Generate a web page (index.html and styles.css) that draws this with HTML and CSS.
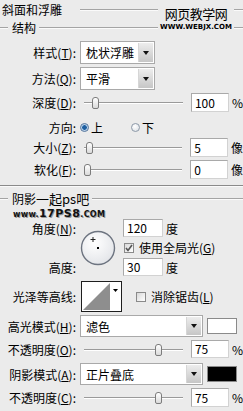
FILE: index.html
```html
<!DOCTYPE html>
<html lang="zh-CN">
<head>
  <meta charset="UTF-8" />
  <meta name="viewport" content="width=device-width, initial-scale=1.0"/>
  <title>斜面和浮雕</title>
  <link rel="stylesheet" href="styles.css">
</head>
<body>
  <div class="dialog">
    <!-- watermark top right -->
    <div class="wm-webjx">
      <div class="wm-cn">网页教学网</div>
      <div class="wm-en">WWW.WEBJX.COM</div>
    </div>

    <div class="title-row">
      <span class="title">斜面和浮雕</span>
      <span class="rule"></span>
    </div>

    <!-- 结构 -->
    <div class="legend">
      <span class="rule stub"></span>
      <span class="legend-text">结构</span>
      <span class="rule"></span>
    </div>

    <div class="row r-style">
      <span class="label">样式(<u>T</u>):</span>
      <div class="select">
        <span class="select-value">枕状浮雕</span>
        <span class="select-btn"></span>
      </div>
    </div>

    <div class="row r-method">
      <span class="label">方法(<u>Q</u>):</span>
      <div class="select">
        <span class="select-value">平滑</span>
        <span class="select-btn"></span>
      </div>
    </div>

    <div class="row r-depth">
      <span class="label">深度(<u>D</u>):</span>
      <div class="slider"><span class="thumb" style="left:8px"></span></div>
      <span class="field">100</span>
      <span class="unit">%</span>
    </div>

    <div class="row r-dir">
      <span class="label">方向:</span>
      <span class="radio checked"></span><span class="opt">上</span>
      <span class="radio gap"></span><span class="opt">下</span>
    </div>

    <div class="row r-size">
      <span class="label">大小(<u>Z</u>):</span>
      <div class="slider"><span class="thumb" style="left:2px"></span></div>
      <span class="field">5</span>
      <span class="unit">像</span>
    </div>

    <div class="row r-soft">
      <span class="label">软化(<u>F</u>):</span>
      <div class="slider"><span class="thumb" style="left:0px"></span></div>
      <span class="field">0</span>
      <span class="unit">像</span>
    </div>

    <div class="separator"></div>

    <!-- 阴影 -->
    <div class="legend shadow-legend">
      <span class="rule stub"></span>
      <span class="legend-text">阴影<span class="wm-17">一起ps吧</span></span>
      <span class="rule"></span>
    </div>
    <div class="wm-17ps8">www.<b>17PS8</b>.COM</div>

    <div class="angle">
      <span class="label a-lbl1">角度(<u>N</u>):</span>
      <div class="dial">
        <svg width="36" height="36" viewBox="0 0 36 36">
          <defs>
            <radialGradient id="dialfill" cx="40%" cy="35%" r="70%">
              <stop offset="0" stop-color="#ffffff"/>
              <stop offset="1" stop-color="#e2e4e8"/>
            </radialGradient>
          </defs>
          <circle cx="18" cy="18" r="16.5" fill="url(#dialfill)" stroke="#6d7480" stroke-width="1.4"/>
          <path d="M13 7v5M10.5 9.5h5" stroke="#222" stroke-width="1"/>
          <rect x="17" y="17" width="2" height="2" fill="#000"/>
        </svg>
      </div>
      <div class="a-cell a-r1"><span class="field wide">120</span><span class="unit">度</span></div>
      <div class="a-cell a-r2"><span class="check checked"></span><span class="opt">使用全局光(<u>G</u>)</span></div>
      <span class="label a-lbl3">高度:</span>
      <div class="a-cell a-r3"><span class="field wide">30</span><span class="unit">度</span></div>
    </div>

    <div class="row r-contour">
      <span class="label">光泽等高线:</span>
      <div class="contour">
        <svg width="41" height="31" viewBox="0 0 41 31">
          <rect x="0.5" y="0.5" width="40" height="30" fill="#fff" stroke="#1e1e1e"/>
          <polygon points="2,29 29,2 29,29" fill="#8e8e8e"/>
          <polygon points="32,8 37,8 34.5,11" fill="#000"/>
        </svg>
      </div>
      <span class="check"></span><span class="opt">消除锯齿(<u>L</u>)</span>
    </div>

    <div class="row r-hmode">
      <span class="label">高光模式(<u>H</u>):</span>
      <div class="select long">
        <span class="select-value">滤色</span>
        <span class="select-btn"></span>
      </div>
      <span class="swatch white"></span>
    </div>

    <div class="row r-op1">
      <span class="label">不透明度(<u>O</u>):</span>
      <div class="slider"><span class="thumb" style="left:71px"></span></div>
      <span class="field">75</span>
      <span class="unit">%</span>
    </div>

    <div class="row r-smode">
      <span class="label">阴影模式(<u>A</u>):</span>
      <div class="select long">
        <span class="select-value">正片叠底</span>
        <span class="select-btn"></span>
      </div>
      <span class="swatch black"></span>
    </div>

    <div class="row r-op2">
      <span class="label">不透明度(<u>C</u>):</span>
      <div class="slider"><span class="thumb" style="left:71px"></span></div>
      <span class="field">75</span>
      <span class="unit">%</span>
    </div>
  </div>
</body>
</html>
```
FILE: styles.css
```css
body {
  margin: 0;
  background: #ebebeb;
  font-family: "Noto Sans CJK SC", sans-serif;
  font-size: 12px;
  color: #000;
}

u {
  text-decoration: underline;
  text-underline-offset: 1px;
}

.dialog {
  position: relative;
  width: 243px;
  height: 411px;
  overflow: hidden;
}

/* header + group legends */
.title-row {
  height: 20px;
  display: flex;
  align-items: center;
}

.title {
  padding-left: 2px;
  padding-right: 18px;
  line-height: 14px;
}

.rule {
  flex: 1;
  height: 1px;
  background: #a4a4a4;
  border-bottom: 1px solid #fafafa;
}

.rule.stub {
  flex: none;
  width: 8px;
}

.legend {
  height: 16px;
  display: flex;
  align-items: center;
}

.legend-text {
  padding: 0 3px 0 4px;
  line-height: 14px;
}

.wm-webjx {
  position: absolute;
  left: 158px;
  top: 5px;
  width: 76px;
  height: 30px;
  background: #ebebeb;
  text-align: center;
  z-index: 1;
}

.wm-cn {
  font-size: 13px;
  line-height: 17px;
  letter-spacing: -0.5px;
}

.wm-en {
  font-family: "DejaVu Sans", sans-serif;
  font-weight: bold;
  font-size: 7px;
  line-height: 10px;
  white-space: nowrap;
}

/* rows */
.row {
  display: flex;
  align-items: center;
}

.label {
  flex: none;
  width: 80px;
  padding-right: 4px;
  box-sizing: border-box;
  text-align: right;
  white-space: nowrap;
}

.r-style { margin-top: 5px; height: 23px; }
.r-method { margin-top: 3px; height: 23px; }
.r-depth { margin-top: 3px; height: 19px; }
.r-dir { margin-top: 6px; height: 18px; }
.r-size { margin-top: 2px; height: 19px; }
.r-soft { margin-top: 3px; height: 19px; }

.select {
  display: flex;
  width: 75px;
  height: 23px;
  box-sizing: border-box;
  background: #fff;
  border: 1px solid #a9a9a9;
}

.select.long {
  width: 123px;
  height: 22px;
}

.select-value {
  flex: 1;
  padding-left: 5px;
  line-height: 21px;
}

.select-btn {
  width: 14px;
  margin: 1px;
  display: flex;
  align-items: center;
  justify-content: center;
  background: linear-gradient(#ededed, #c6c6c6);
  border-left: 1px solid #d6d6d6;
}

.select-btn::after {
  content: "";
  border-left: 3px solid transparent;
  border-right: 3px solid transparent;
  border-top: 4px solid #111;
}

.slider {
  position: relative;
  width: 99px;
  height: 19px;
  margin-left: 4px;
  background: linear-gradient(#9a9a9a, #9a9a9a) no-repeat 0 9px / 100% 1px,
              linear-gradient(#ffffff, #ffffff) no-repeat 0 10px / 100% 1px;
}

.thumb {
  position: absolute;
  top: 4px;
  width: 5px;
  height: 10px;
  border: 1px solid #7c7c7c;
  border-radius: 3px 3px 2px 2px;
  background: linear-gradient(#ffffff, #dadada);
}

.field {
  width: 38px;
  height: 19px;
  box-sizing: border-box;
  margin-left: 8px;
  padding-left: 3px;
  background: #fff;
  border: 1px solid #a9a9a9;
  border-right-color: #d2d2d2;
  border-bottom-color: #d2d2d2;
  line-height: 17px;
}

.field.wide {
  width: 40px;
  height: 18px;
  margin-left: 0;
  line-height: 16px;
}

.unit {
  margin-left: 3px;
}

.radio {
  width: 9px;
  height: 9px;
  box-sizing: border-box;
  border-radius: 50%;
  border: 1px solid #8d99a8;
  background: radial-gradient(circle at 40% 35%, #ffffff, #d8dde3);
}

.radio.checked {
  background: radial-gradient(circle, #1e5fa0 0 2px, #9fc2e4 2.5px, #e8eef5 4px);
  border-color: #51739b;
}

.radio.gap {
  margin-left: 28px;
}

.opt {
  margin-left: 2px;
}

.check {
  flex: none;
  width: 10px;
  height: 10px;
  box-sizing: border-box;
  border: 1px solid #8a8a8a;
  background: linear-gradient(135deg, #d8d8d8, #ffffff);
}

.check.checked {
  background: url("data:image/svg+xml,%3Csvg xmlns='http://www.w3.org/2000/svg' width='8' height='8'%3E%3Cpath d='M1 4l2 2.5L7 1' fill='none' stroke='%23555' stroke-width='1.6'/%3E%3C/svg%3E") no-repeat center, linear-gradient(135deg, #d8d8d8, #ffffff);
}

.check + .opt {
  margin-left: 5px;
}

.separator {
  margin-top: 6px;
  height: 1px;
  background: #8a8a8a;
  border-bottom: 1px solid #fafafa;
}

.shadow-legend {
  margin-top: 4px;
}

.wm-17 {
  font-size: 13px;
}

.wm-17ps8 {
  height: 12px;
  padding-top: 1px;
  box-sizing: border-box;
  padding-left: 13px;
  font-family: "DejaVu Sans", sans-serif;
  font-weight: bold;
  font-size: 8px;
  line-height: 11px;
  color: #111;
  text-shadow: 1px 1px 0 #9a9a9a;
  letter-spacing: 0.3px;
}

.wm-17ps8 b {
  font-size: 11px;
  letter-spacing: 0.5px;
}

/* angle block */
.angle {
  display: grid;
  grid-template-columns: 80px 43px auto;
  grid-template-rows: 18px 17px 18px;
  row-gap: 2px;
}

.a-lbl1 { grid-column: 1; grid-row: 1; align-self: center; }
.a-lbl3 { grid-column: 1; grid-row: 3; align-self: center; }

.dial {
  grid-column: 2;
  grid-row: 1 / 4;
  align-self: center;
  height: 36px;
}

.dial svg {
  display: block;
}

.a-cell {
  grid-column: 3;
  display: flex;
  align-items: center;
}

.a-r1 { grid-row: 1; }
.a-r2 { grid-row: 2; padding-left: 1px; }
.a-r3 { grid-row: 3; }

.r-contour {
  margin-top: 5px;
  height: 31px;
}

.contour {
  margin-left: 1px;
  height: 31px;
}

.contour svg {
  display: block;
}

.r-contour .check {
  margin-left: 14px;
}

.r-hmode { margin-top: 3px; height: 22px; }
.r-op1 { margin-top: 3px; height: 18px; }
.r-op1 .field { height: 18px; line-height: 16px; }
.r-smode { margin-top: 5px; height: 22px; }
.r-op2 { margin-top: 2px; height: 20px; }

.swatch {
  width: 30px;
  height: 16px;
  box-sizing: border-box;
  margin-left: 4px;
  border: 1px solid #8a8a8a;
}

.swatch.white { background: #fff; }
.swatch.black { background: #000; }
```
